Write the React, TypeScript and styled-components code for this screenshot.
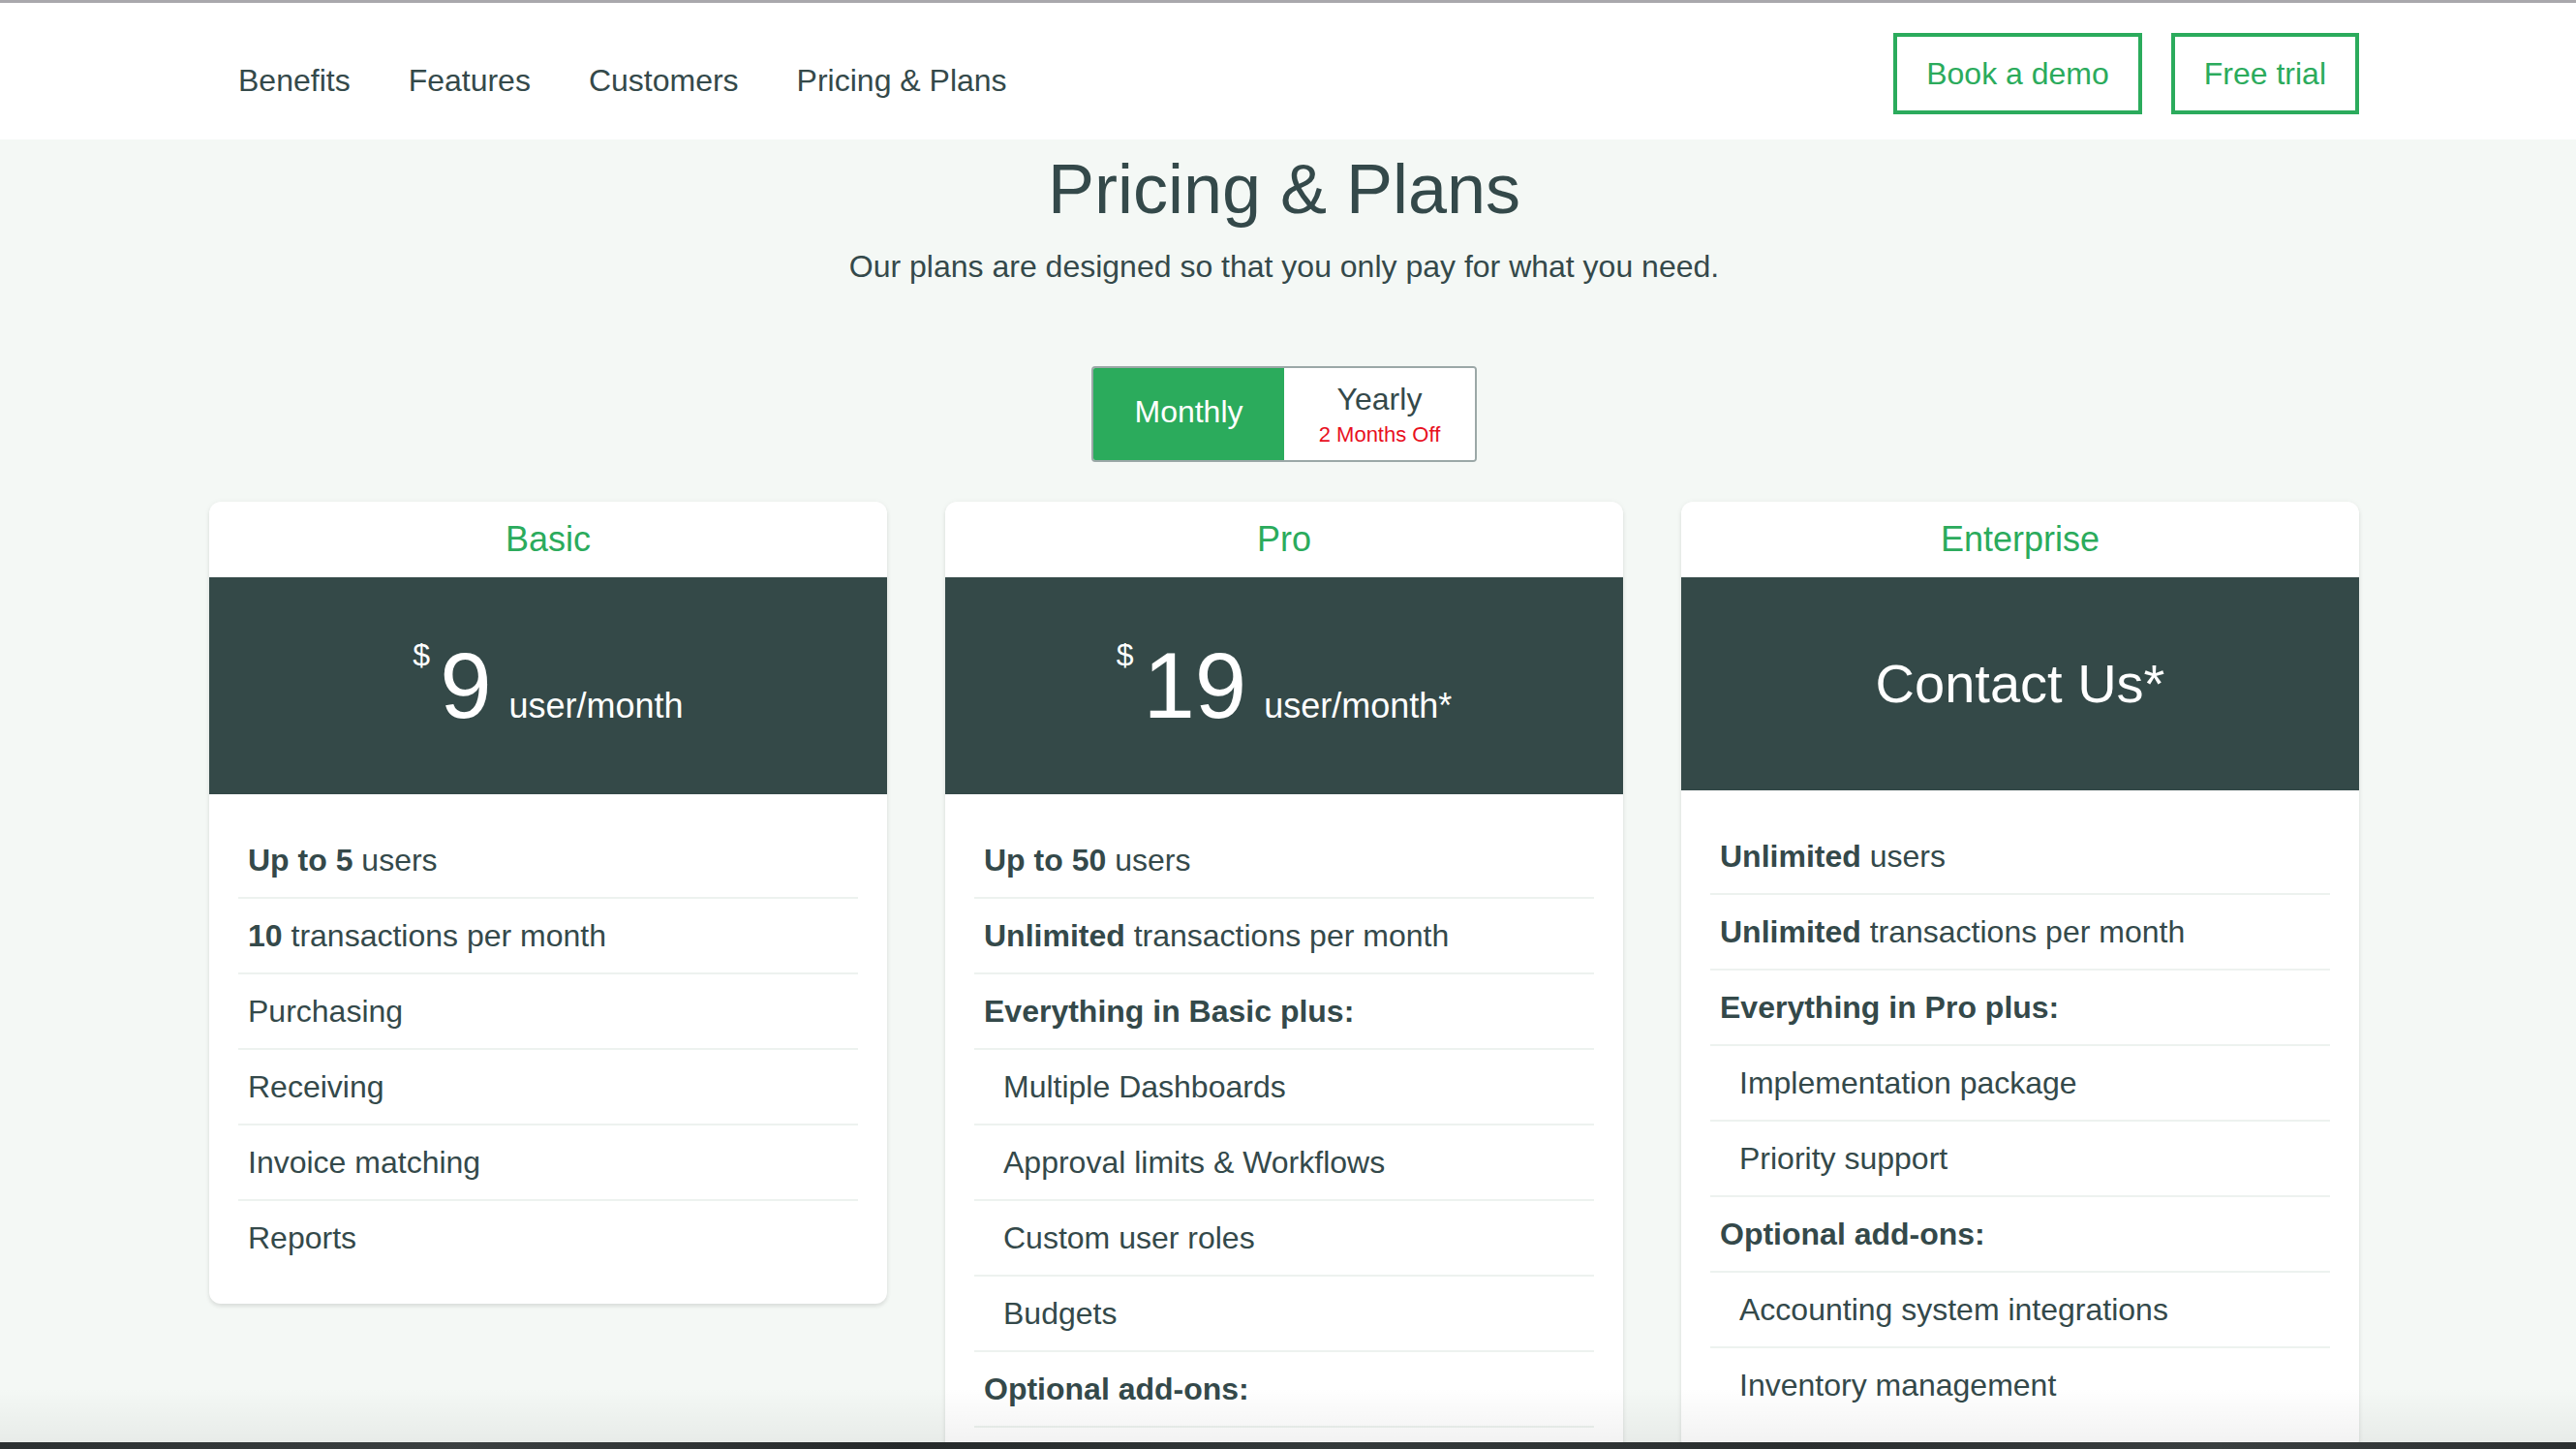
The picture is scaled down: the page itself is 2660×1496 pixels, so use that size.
import React from 'react';
import styled, { createGlobalStyle } from 'styled-components';

const ink = '#34494a';
const green = '#2bab5c';
const band = '#344948';
const pageBg = '#f4f8f5';
const rule = '#edf2ef';

const GlobalStyle = createGlobalStyle`
  html, body {
    margin: 0;
    padding: 0;
    height: 100%;
    overflow: hidden;
  }
  body {
    font-family: "Liberation Sans", Arial, Helvetica, sans-serif;
    color: ${ink};
    background: ${pageBg};
  }
  *, *::before, *::after {
    box-sizing: border-box;
  }
`;

const Window = styled.div`
  display: flex;
  flex-direction: column;
  height: 100vh;
`;

const TopEdge = styled.div`
  flex-shrink: 0;
  height: 3px;
  background: #a9a8ac;
`;

const BottomEdge = styled.div`
  flex-shrink: 0;
  height: 7px;
  background: linear-gradient(90deg, #2b3031 0%, #3b4041 18%, #25292a 35%, #343a3b 52%, #2a2e2f 70%, #3a3f40 86%, #2c3031 100%);
`;

const Container = styled.div`
  width: 2228px;
  padding-right: 8px;
  margin: 0 auto;
`;

/* ---------- top navigation ---------- */

const NavBar = styled.header`
  flex-shrink: 0;
  height: 141px;
  background: #ffffff;
`;

const NavInner = styled(Container)`
  display: flex;
  justify-content: space-between;
  align-items: flex-start;
`;

const NavLinks = styled.nav`
  display: flex;
  margin-top: 62px;
`;

const NavLink = styled.a`
  padding: 0 30px;
  font-size: 32px;
  line-height: 36px;
  color: ${ink};
  text-decoration: none;
`;

const NavActions = styled.div`
  display: flex;
  gap: 30px;
  margin-top: 31px;
`;

const OutlineButton = styled.button`
  height: 84px;
  padding: 0 30px;
  border: 4px solid ${green};
  background: #ffffff;
  color: ${green};
  font-family: inherit;
  font-size: 32px;
  line-height: 76px;
  cursor: pointer;
`;

/* ---------- pricing section ---------- */

const Main = styled.main`
  position: relative;
  flex: 1;
  min-height: 0;
  overflow: hidden;
  padding-top: 12px;
  background: ${pageBg};

  &::after {
    content: '';
    position: absolute;
    left: 0;
    right: 0;
    bottom: 0;
    height: 56px;
    background: linear-gradient(rgba(0, 0, 0, 0), rgba(0, 0, 0, 0.05));
    pointer-events: none;
  }
`;

const Hero = styled(Container)`
  display: flex;
  flex-direction: column;
  align-items: center;
  text-align: center;
`;

const Title = styled.h1`
  margin: 0;
  font-size: 72px;
  line-height: 79px;
  font-weight: 400;
  color: ${ink};
`;

const Lead = styled.p`
  margin: 20px 0 0;
  font-size: 32px;
  line-height: 40px;
  color: ${ink};
`;

const Toggle = styled.div`
  display: flex;
  margin-top: 83px;
  height: 99px;
  border: 2px solid #9ba8a7;
  border-radius: 4px;
  overflow: hidden;
`;

const ToggleOption = styled.button<{ $active?: boolean }>`
  display: flex;
  flex-direction: column;
  align-items: center;
  justify-content: center;
  gap: 6px;
  width: 197px;
  padding: 0 0 ${(p) => (p.$active ? '6px' : '0')};
  border: none;
  background: ${(p) => (p.$active ? green : '#ffffff')};
  color: ${(p) => (p.$active ? '#ffffff' : ink)};
  font-family: inherit;
  font-size: 32px;
  line-height: 36px;
  cursor: pointer;
`;

const Discount = styled.span`
  font-size: 22px;
  line-height: 26px;
  color: #e8101e;
`;

const Cards = styled(Container)`
  display: grid;
  grid-template-columns: repeat(3, 700px);
  column-gap: 60px;
  align-items: start;
  margin-top: 41px;
`;

const Card = styled.section`
  background: #ffffff;
  border-radius: 12px;
  overflow: hidden;
  box-shadow: 0 3px 4px rgba(0, 0, 0, 0.09), 0 0 6px rgba(0, 0, 0, 0.04);
`;

const CardHeader = styled.h2`
  margin: 0;
  height: 78px;
  font-size: 36px;
  line-height: 78px;
  font-weight: 400;
  text-align: center;
  color: ${green};
`;

const PriceBand = styled.div`
  padding: 64px 0;
  background: ${band};
  color: #ffffff;
`;

const PriceRow = styled.div`
  display: flex;
  justify-content: center;
  align-items: baseline;
`;

const Currency = styled.span`
  align-self: flex-start;
  margin-right: 10px;
  font-size: 32px;
  line-height: 32px;
`;

const Amount = styled.span`
  font-size: 96px;
  line-height: 96px;
  font-weight: 300;
`;

const Unit = styled.span`
  margin-left: 18px;
  font-size: 36px;
  line-height: 36px;
`;

const ContactLine = styled.div`
  font-size: 56px;
  line-height: 92px;
  text-align: center;
`;

/* $continues: the list carries on past the last row shown, so that row
   keeps its rule and the card runs on below it */
const FeatureList = styled.ul<{ $continues?: boolean }>`
  list-style: none;
  margin: 0;
  padding: 30px 30px ${(p) => (p.$continues ? '60px' : '30px')};

  ${(p) =>
    p.$continues &&
    `
    & > li:last-child {
      border-bottom: 2px solid ${rule};
    }
  `}
`;

const FeatureItem = styled.li<{ $indent?: boolean }>`
  padding: 0 10px 0 ${(p) => (p.$indent ? '30px' : '10px')};
  font-size: 32px;
  line-height: 76px;
  white-space: nowrap;
  color: ${ink};

  & + & {
    border-top: 2px solid ${rule};
  }

  strong {
    font-weight: 700;
  }
`;

type Feature = { strong?: string; text?: string; indent?: boolean };

type Plan = {
  name: string;
  price?: { amount: string; unit: string };
  contact?: string;
  continues?: boolean;
  features: Feature[];
};

const plans: Plan[] = [
  {
    name: 'Basic',
    price: { amount: '9', unit: 'user/month' },
    features: [
      { strong: 'Up to 5', text: ' users' },
      { strong: '10', text: ' transactions per month' },
      { text: 'Purchasing' },
      { text: 'Receiving' },
      { text: 'Invoice matching' },
      { text: 'Reports' },
    ],
  },
  {
    name: 'Pro',
    price: { amount: '19', unit: 'user/month*' },
    continues: true,
    features: [
      { strong: 'Up to 50', text: ' users' },
      { strong: 'Unlimited', text: ' transactions per month' },
      { strong: 'Everything in Basic plus:' },
      { text: 'Multiple Dashboards', indent: true },
      { text: 'Approval limits & Workflows', indent: true },
      { text: 'Custom user roles', indent: true },
      { text: 'Budgets', indent: true },
      { strong: 'Optional add-ons:' },
    ],
  },
  {
    name: 'Enterprise',
    contact: 'Contact Us*',
    features: [
      { strong: 'Unlimited', text: ' users' },
      { strong: 'Unlimited', text: ' transactions per month' },
      { strong: 'Everything in Pro plus:' },
      { text: 'Implementation package', indent: true },
      { text: 'Priority support', indent: true },
      { strong: 'Optional add-ons:' },
      { text: 'Accounting system integrations', indent: true },
      { text: 'Inventory management', indent: true },
    ],
  },
];

const navItems = ['Benefits', 'Features', 'Customers', 'Pricing & Plans'];

function PlanCard({ plan }: { plan: Plan }) {
  return (
    <Card>
      <CardHeader>{plan.name}</CardHeader>
      <PriceBand>
        {plan.price ? (
          <PriceRow>
            <Currency>$</Currency>
            <Amount>{plan.price.amount}</Amount>
            <Unit>{plan.price.unit}</Unit>
          </PriceRow>
        ) : (
          <ContactLine>{plan.contact}</ContactLine>
        )}
      </PriceBand>
      <FeatureList $continues={plan.continues}>
        {plan.features.map((f, i) => (
          <FeatureItem key={i} $indent={f.indent}>
            {f.strong && <strong>{f.strong}</strong>}
            {f.text}
          </FeatureItem>
        ))}
      </FeatureList>
    </Card>
  );
}

export default function App() {
  return (
    <>
      <GlobalStyle />
      <Window>
        <TopEdge />
        <NavBar>
          <NavInner>
            <NavLinks>
              {navItems.map((item) => (
                <NavLink key={item} href="#">
                  {item}
                </NavLink>
              ))}
            </NavLinks>
            <NavActions>
              <OutlineButton>Book a demo</OutlineButton>
              <OutlineButton>Free trial</OutlineButton>
            </NavActions>
          </NavInner>
        </NavBar>
        <Main>
          <Hero>
            <Title>Pricing &amp; Plans</Title>
            <Lead>Our plans are designed so that you only pay for what you need.</Lead>
            <Toggle>
              <ToggleOption $active>Monthly</ToggleOption>
              <ToggleOption>
                <span>Yearly</span>
                <Discount>2 Months Off</Discount>
              </ToggleOption>
            </Toggle>
          </Hero>
          <Cards>
            {plans.map((plan) => (
              <PlanCard key={plan.name} plan={plan} />
            ))}
          </Cards>
        </Main>
        <BottomEdge />
      </Window>
    </>
  );
}
